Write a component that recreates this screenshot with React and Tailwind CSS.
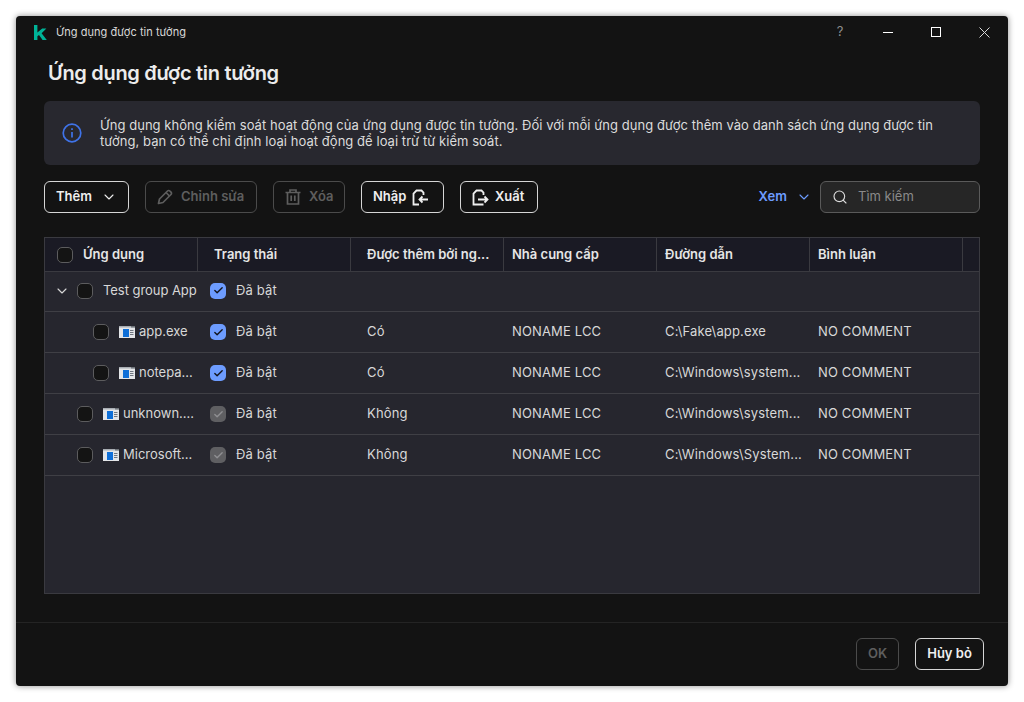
import { ChevronDown, Search, Check } from 'lucide-react'

const cols = 'grid grid-cols-[152px_153px_153px_153px_153px_153px_17px]'

const rows = [
  { name: 'app.exe', indent: 'pl-[48px]', on: true, byUser: 'Có', path: 'C:\\Fake\\app.exe' },
  { name: 'notepa...', indent: 'pl-[48px]', on: true, byUser: 'Có', path: 'C:\\Windows\\system...' },
  { name: 'unknown....', indent: 'pl-[32px]', on: false, byUser: 'Không', path: 'C:\\Windows\\system...' },
  { name: 'Microsoft...', indent: 'pl-[32px]', on: false, byUser: 'Không', path: 'C:\\Windows\\System...' },
]

function AppIcon() {
  return (
    <svg width="16" height="12" viewBox="0 0 16 12" className="shrink-0">
      <rect width="16" height="12" fill="#e4e6e9" />
      <rect x="0" y="0" width="16" height="1.5" fill="#a8adb3" />
      <rect x="12" y="0" width="4" height="1.5" fill="#6f747a" />
      <rect x="4" y="3" width="6" height="8" fill="#0f6fd8" />
      <path d="M11 4.5h3.5M11 6.5h3.5M11 8.5h3.5" stroke="#6f7680" strokeWidth="1" />
    </svg>
  )
}

function Box() {
  return <span className="block w-4 h-4 shrink-0 rounded-[5px] border border-[#5c5c5e] bg-[#141414]" />
}

function StateBox({ on }) {
  return (
    <span className={`flex items-center justify-center w-4 h-4 shrink-0 rounded-[5px] ${on ? 'bg-[#6d9cff] text-[#12141c]' : 'bg-[#5f5f62] text-[#8f8f92]'}`}>
      <Check size={11} strokeWidth={3} />
    </span>
  )
}

function ImportIcon() {
  return (
    <svg width="17" height="17" viewBox="0 0 17 17" fill="none" stroke="currentColor" strokeWidth="1.8">
      <path d="M7 15.5H1.5V4.5l3-3h5l2 2v2.5" />
      <path d="M16 10.5H7.5M10.5 7.5l-3 3 3 3" />
    </svg>
  )
}

function ExportIcon() {
  return (
    <svg width="17" height="17" viewBox="0 0 17 17" fill="none" stroke="currentColor" strokeWidth="1.8">
      <path d="M11.5 15.5h-10V4.5l3-3h5l2 2v2.5" />
      <path d="M6 10.5h9.5M12.5 7.5l3 3-3 3" />
    </svg>
  )
}

function PencilIcon() {
  return (
    <svg width="16" height="16" viewBox="0 0 16 16" fill="none" stroke="currentColor" strokeWidth="1.7" strokeLinejoin="round">
      <path d="M1.5 14.5l1-4.5 8-8a1.6 1.6 0 0 1 2.3 0l1.2 1.2a1.6 1.6 0 0 1 0 2.3l-8 8z" />
      <path d="M9 3.5l3.5 3.5" />
    </svg>
  )
}

function TrashIcon() {
  return (
    <svg width="16" height="16" viewBox="0 0 16 16" fill="none" stroke="currentColor" strokeWidth="1.7">
      <path d="M0.5 3.5h15M5 3.5V1h6v2.5M2.5 3.5v11.5h11V3.5M6.2 6.5v5.5M9.8 6.5v5.5" />
    </svg>
  )
}

export default function App() {
  return (
    <div className="min-h-[702px] bg-white p-4 font-['Inter','Noto_Sans',sans-serif]">
      <div className="flex flex-col h-[670px] rounded-[4px] bg-[#131313] text-[#e6e6e6] shadow-[0_0_6px_rgba(0,0,0,0.45)]">
        <div className="flex items-center h-8 shrink-0 pl-[18px]">
          <svg width="13" height="15" viewBox="0 0 13 15" fill="#00b398">
            <path d="M0 0h3.4v7.6L8.2 3.6h4.2L7.6 8.2 12.8 15H8.6L5 9.9 3.4 11.2V15H0z" />
          </svg>
          <span className="ml-[9px] text-[11px] tracking-[0.05px] text-[#d8d8d8]">Ứng dụng được tin tưởng</span>
          <div className="ml-auto flex items-center h-full">
            <span className="w-12 text-center text-[13px] text-[#8d8d8d]">?</span>
            <div className="w-12 flex justify-center"><span className="block w-[10px] h-px bg-white" /></div>
            <div className="w-12 flex justify-center"><span className="block w-[10px] h-[10px] border border-white" /></div>
            <div className="w-12 flex justify-center">
              <svg width="11" height="11" viewBox="0 0 11 11" stroke="#d8d8d8" strokeWidth="1"><path d="M.5.5l10 10M10.5.5l-10 10" /></svg>
            </div>
          </div>
        </div>

        <div className="flex flex-col flex-1 min-h-0 px-7 pb-7">
          <h1 className="pl-1 mt-[11px] h-[28px] leading-[28px] text-[20px] font-semibold tracking-[-0.3px] text-[#ececec]">Ứng dụng được tin tưởng</h1>

          <div className="flex items-center h-16 mt-[14px] rounded-[6px] bg-[#28282f] pl-[18px] pr-8">
            <svg width="20" height="20" viewBox="0 0 20 20" fill="none" stroke="#3f73e8" strokeWidth="1.7" className="shrink-0">
              <circle cx="10" cy="10" r="8.8" />
              <path d="M10 9v5.5M10 5.3v1.6" />
            </svg>
            <p className="ml-[18px] -mt-[1px] text-[13px] leading-4 tracking-[0.05px] text-[#dcdcdc]">
              Ứng dụng không kiểm soát hoạt động của ứng dụng được tin tưởng. Đối với mỗi ứng dụng được thêm vào danh sách ứng dụng được tin tưởng, bạn có thể chỉ định loại hoạt động để loại trừ từ kiểm soát.
            </p>
          </div>

          <div className="flex items-center h-8 mt-4 text-[13px] font-semibold">
            <button className="flex items-center justify-between w-[85px] h-8 px-[11px] rounded-[6px] border border-[#d6d6d6] text-[#efefef]">
              Thêm <ChevronDown size={16} strokeWidth={1.6} />
            </button>
            <button className="flex items-center gap-[8px] w-[112px] h-8 ml-4 pl-[11px] rounded-[6px] border border-[#4b4b4b] text-[#5e5e5e]">
              <PencilIcon /> Chỉnh sửa
            </button>
            <button className="flex items-center gap-[8px] w-[72px] h-8 ml-4 pl-[11px] rounded-[6px] border border-[#4b4b4b] text-[#5e5e5e]">
              <TrashIcon /> Xóa
            </button>
            <button className="flex items-center gap-[6px] w-[83px] h-8 ml-4 pl-[11px] rounded-[6px] border border-[#d6d6d6] text-[#efefef]">
              Nhập <ImportIcon />
            </button>
            <button className="flex items-center gap-[6px] w-[78px] h-8 ml-4 pl-[11px] rounded-[6px] border border-[#d6d6d6] text-[#efefef]">
              <ExportIcon /> Xuất
            </button>
            <span className="ml-auto text-[#6d9cff]">Xem</span>
            <ChevronDown size={16} strokeWidth={1.6} className="ml-[9px] text-[#6d9cff]" />
            <div className="flex items-center w-[160px] h-8 ml-[8px] pl-[11px] rounded-[6px] border border-[#5a5a5a] bg-[#262626]">
              <Search size={16} strokeWidth={1.7} className="text-[#dcdcdc]" />
              <span className="ml-[10px] text-[13px] font-normal text-[#8a8a8a]">Tìm kiếm</span>
            </div>
          </div>

          <div className="flex flex-col h-[357px] mt-6 border border-[#3a3a40] bg-[#26262e]">
            <div className={`${cols} grid-cols-[153px_153px_153px_153px_153px_153px_16px] h-[34px] shrink-0 bg-[#1a1a24] border-b border-[#3a3a40] text-[13px] font-semibold text-[#e6e6e6]`}>
              <div className="flex items-center pl-3 border-r border-[#3a3a40]">
                <Box /><span className="ml-[10px]">Ứng dụng</span>
              </div>
              <div className="flex items-center pl-4 border-r border-[#3a3a40]">Trạng thái</div>
              <div className="flex items-center pl-4 border-r border-[#3a3a40]">Được thêm bởi ng...</div>
              <div className="flex items-center pl-2 border-r border-[#3a3a40]">Nhà cung cấp</div>
              <div className="flex items-center pl-2 border-r border-[#3a3a40]">Đường dẫn</div>
              <div className="flex items-center pl-2 border-r border-[#3a3a40]">Bình luận</div>
              <div />
            </div>

            <div className={`${cols} grid-cols-[153px_153px_153px_153px_153px_153px_16px] h-[40px] pb-[2px] items-center border-b border-[#3f3f45] text-[13px] tracking-[0.15px] text-[#d8d8d8]`}>
              <div className="flex items-center pl-[9px] whitespace-nowrap">
                <ChevronDown size={16} strokeWidth={1.7} />
                <span className="ml-[7px]"><Box /></span>
                <span className="ml-[10px] tracking-[-0.05px]">Test group App</span>
              </div>
              <div className="flex items-center pl-[12px]">
                <StateBox on /><span className="ml-[10px]">Đã bật</span>
              </div>
            </div>

            {rows.map(r => (
              <div key={r.name} className={`${cols} grid-cols-[153px_153px_153px_153px_153px_153px_16px] h-[41px] items-center border-b border-[#3f3f45] text-[13px] tracking-[0.15px] text-[#d8d8d8]`}>
                <div className={`flex items-center ${r.indent} whitespace-nowrap`}>
                  <Box />
                  <span className="ml-[10px]"><AppIcon /></span>
                  <span className="ml-1 tracking-[0px]">{r.name}</span>
                </div>
                <div className="flex items-center pl-[12px]">
                  <StateBox on={r.on} /><span className="ml-[10px]">Đã bật</span>
                </div>
                <div className="pl-4">{r.byUser}</div>
                <div className="pl-2">NONAME LCC</div>
                <div className="pl-2 whitespace-nowrap">{r.path}</div>
                <div className="pl-2">NO COMMENT</div>
                <div />
              </div>
            ))}
          </div>
        </div>

        <div className="flex items-start justify-end shrink-0 h-[64px] pt-[15px] pr-6 border-t border-[#242424] text-[13px] font-semibold">
          <button className="w-[43px] h-8 rounded-[6px] border border-[#4b4b4b] text-[#5e5e5e]">OK</button>
          <button className="w-[69px] h-8 ml-4 rounded-[6px] border border-[#d6d6d6] text-[#efefef]">Hủy bỏ</button>
        </div>
      </div>
    </div>
  )
}
